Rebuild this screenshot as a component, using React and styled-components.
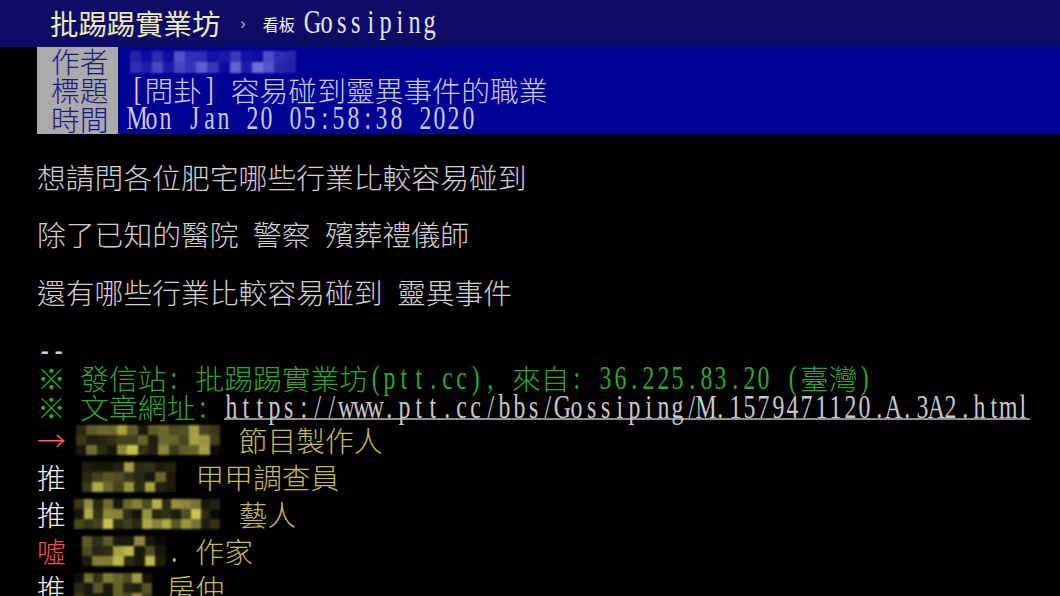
import React from "react";
import styled, { createGlobalStyle } from "styled-components";

const CJK = `"Noto Sans CJK TC", "Noto Sans CJK SC", sans-serif`;

const GlobalStyle = createGlobalStyle`
	body {
		margin: 0;
		background: #000;
		font-family: ${CJK};
		font-weight: 300;
	}
`;

// terminal cells: full-width glyphs take two columns, the rest take one
const isWide = (ch) =>
	/[\u1100-\u115F\u2190-\u21FF\u203B\u2E80-\uA4CF\uAC00-\uD7A3\uF900-\uFAFF\uFE30-\uFE4F\uFF00-\uFF60\uFFE0-\uFFE6]/.test(
		ch
	);

const Term = ({ text }) => (
	<>
		{Array.from(text).map((ch, i) =>
			isWide(ch) ? (
				<Cell key={i} $wide>
					{ch}
				</Cell>
			) : (
				<Cell key={i}>
					<Latin>{ch}</Latin>
				</Cell>
			)
		)}
	</>
);

const rng = (seed) => () => {
	seed = (seed + 0x6d2b79f5) | 0;
	let t = Math.imul(seed ^ (seed >>> 15), 1 | seed);
	t = (t + Math.imul(t ^ (t >>> 7), 61 | t)) ^ t;
	return ((t ^ (t >>> 14)) >>> 0) / 4294967296;
};

const mix = (lo, hi, t) =>
	`rgb(${lo.map((v, i) => Math.round(v + (hi[i] - v) * t)).join(",")})`;

// pixelated block over a hidden user id
const Mosaic = ({ width, block = 10, rows = 3, seed, lo, hi }) => {
	const rand = rng(seed);
	const cols = Math.max(1, Math.round(width / block));
	const cells = [];
	for (let r = 0; r < rows; r++) {
		for (let c = 0; c < cols; c++) {
			const t = Math.pow(rand(), 1.5);
			const edge = c === 0 || c === cols - 1;
			cells.push(
				<Block
					key={`${r}-${c}`}
					style={{ background: mix(lo, hi, t), opacity: edge ? 0.45 : 1 }}
				/>
			);
		}
	}
	return (
		<MosaicGrid $cols={cols} $block={block} $width={width}>
			{cells}
		</MosaicGrid>
	);
};

const YELLOW = [[22, 22, 12], [205, 198, 82]];
const BLUE = [[10, 10, 160], [120, 120, 225]];

const meta = [
	{ tag: "作者", author: true },
	{ tag: "標題", value: "[問卦] 容易碰到靈異事件的職業" },
	{ tag: "時間", value: "Mon Jan 20 05:58:38 2020" },
];

const pushes = [
	{ tag: "→", color: "#ef5f6f", from: 76, to: 220, col: 14, text: "節目製作人", seed: 11 },
	{ tag: "推", color: "#f4f4f4", from: 82, to: 176, col: 11, text: "甲甲調查員", seed: 27 },
	{ tag: "推", color: "#f4f4f4", from: 74, to: 220, col: 14, text: "藝人", seed: 5 },
	{ tag: "噓", color: "#e85050", from: 82, to: 166, col: 9, text: ". 作家", seed: 43 },
	{ tag: "推", color: "#f4f4f4", from: 74, to: 152, col: 9, text: "房仲", seed: 8 },
];

const HALF = 14.4;

const App = () => {
	return (
		<Page>
			<GlobalStyle />
			<TopBar>
				<Brand>批踢踢實業坊</Brand>
				<Crumb>›</Crumb>
				<BoardTag>看板</BoardTag>
				<BoardName>
					<Term text="Gossiping" />
				</BoardName>
			</TopBar>

			<Main>
				{meta.map((m) => (
					<MetaRow key={m.tag}>
						<MetaTag>{m.tag}</MetaTag>
						<MetaValue>
							{m.author ? (
								<Mosaic width={166} block={11} rows={2} seed={3} lo={BLUE[0]} hi={BLUE[1]} />
							) : (
								<Term text={m.value} />
							)}
						</MetaValue>
					</MetaRow>
				))}

				<Line />
				<Line>
					<Term text="想請問各位肥宅哪些行業比較容易碰到" />
				</Line>
				<Line />
				<Line>
					<Term text="除了已知的醫院 警察 殯葬禮儀師" />
				</Line>
				<Line />
				<Line>
					<Term text="還有哪些行業比較容易碰到 靈異事件" />
				</Line>
				<Line />
				<Line>
					<Term text="--" />
				</Line>
				<Line $color="#2ea52e">
					<Term text="※ 發信站: 批踢踢實業坊(ptt.cc), 來自: 36.225.83.20 (臺灣)" />
				</Line>
				<Line $color="#2ea52e">
					<Term text="※ 文章網址: " />
					<Link>
						<Term text="https://www.ptt.cc/bbs/Gossiping/M.1579471120.A.3A2.html" />
					</Link>
				</Line>

				{pushes.map((p, i) => (
					<PushRow key={i}>
						<PushTag $color={p.color}>{p.tag}</PushTag>
						<PushUser $offset={p.from - 37 - 2 * HALF}>
							<Mosaic width={p.to - p.from} seed={p.seed} lo={YELLOW[0]} hi={YELLOW[1]} />
						</PushUser>
						<PushContent $offset={p.col * HALF + 37 - p.to}>
							<Term text={p.text} />
						</PushContent>
					</PushRow>
				))}
			</Main>
		</Page>
	);
};

export default App;

const Page = styled.div`
	width: 1060px;
	height: 596px;
	overflow: hidden;
	background: #000;
`;

const TopBar = styled.div`
	display: flex;
	align-items: center;
	height: 47px;
	padding-left: 50px;
	background: #0d0b66;
`;

const Brand = styled.span`
	font-size: 28.4px;
	font-weight: 400;
	line-height: 1;
	color: #eeecbc;
`;

const Crumb = styled.span`
	margin-left: 20px;
	font-family: "Liberation Sans", sans-serif;
	font-size: 16px;
	color: #b8b8c8;
`;

const BoardTag = styled.span`
	margin-left: 17px;
	font-size: 16px;
	font-weight: 400;
	color: #f4f4f4;
`;

const BoardName = styled.span`
	margin-left: 10px;
	font-size: 29.4px;
	line-height: 1;
	color: #e6e6ea;
`;

const Main = styled.div`
	padding-left: 37px;
	font-size: 28.8px;
	line-height: 28.8px;
	color: #cfcfcf;
`;

const Cell = styled.span`
	display: inline-flex;
	justify-content: center;
	width: ${(p) => (p.$wide ? "1em" : "0.5em")};
	white-space: pre;
`;

const Latin = styled.span`
	display: inline-block;
	font-family: "Liberation Serif", serif;
	font-weight: 400;
	font-size: 1.18em;
	transform: translateY(-1px) scaleX(0.7);
`;

const MosaicGrid = styled.span`
	display: inline-grid;
	grid-template-columns: repeat(${(p) => p.$cols}, 1fr);
	grid-auto-rows: ${(p) => p.$block}px;
	width: ${(p) => p.$width}px;
	vertical-align: middle;
	filter: blur(1.2px);
`;

const Block = styled.span`
	display: block;
`;

const MetaRow = styled.div`
	display: flex;
	align-items: center;
	height: 29px;
	background: #000092;
`;

const MetaTag = styled.div`
	box-sizing: border-box;
	width: 81px;
	height: 100%;
	padding-left: 14px;
	background: #aaaaaa;
	color: #1a1a86;
`;

const MetaValue = styled.div`
	display: flex;
	align-items: center;
	margin-left: 12px;
	color: #c9c9e6;
`;

const Line = styled.div`
	height: 28.8px;
	white-space: pre;
	color: ${(p) => p.$color || "#cfcfcf"};
`;

// cells are inline blocks, so the underline is a border
const Link = styled.span`
	display: inline-block;
	height: 25px;
	vertical-align: top;
	color: #c8c8c8;
	border-bottom: 2px solid #8e8e8e;
`;

const PushRow = styled.div`
	display: flex;
	align-items: center;
	height: 37px;
`;

const PushTag = styled.span`
	width: 1em;
	color: ${(p) => p.$color};
`;

const PushUser = styled.span`
	display: flex;
	margin-left: ${(p) => p.$offset}px;
`;

const PushContent = styled.span`
	margin-left: ${(p) => p.$offset}px;
	color: #c2ba5a;
	white-space: pre;
`;
